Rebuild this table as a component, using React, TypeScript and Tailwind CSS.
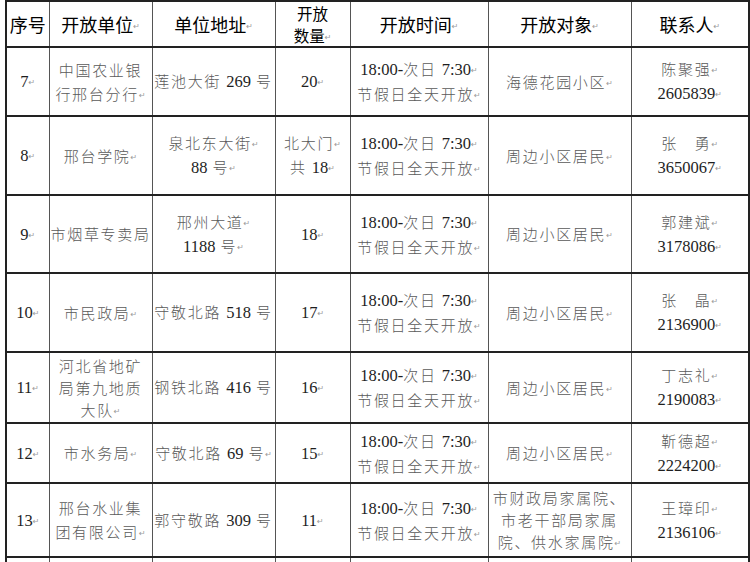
import React from 'react';

const TIME = '18:00-次日 7:30↵\n节假日全天开放↵';

const rows = [
  { n: '7↵', unit: '中国农业银\n行邢台分行↵', addr: '莲池大街 269 号', qty: '20↵', target: '海德花园小区↵', contact: '陈聚强↵\n2605839↵', h: 'h-[69px]' },
  { n: '8↵', unit: '邢台学院↵', addr: '泉北东大街↵\n88 号↵', qty: '北大门↵\n共 18↵', target: '周边小区居民↵', contact: '张　勇↵\n3650067↵', h: 'h-[79px]' },
  { n: '9↵', unit: '市烟草专卖局', addr: '邢州大道↵\n1188 号↵', qty: '18↵', target: '周边小区居民↵', contact: '郭建斌↵\n3178086↵', h: 'h-[78px]' },
  { n: '10↵', unit: '市民政局↵', addr: '守敬北路 518 号', qty: '17↵', target: '周边小区居民↵', contact: '张　晶↵\n2136900↵', h: 'h-[79px]' },
  { n: '11↵', unit: '河北省地矿\n局第九地质\n大队↵', addr: '钢铁北路 416 号', qty: '16↵', target: '周边小区居民↵', contact: '丁志礼↵\n2190083↵', h: 'h-[71px]' },
  { n: '12↵', unit: '市水务局↵', addr: '守敬北路 69 号↵', qty: '15↵', target: '周边小区居民↵', contact: '靳德超↵\n2224200↵', h: 'h-[60px]' },
  { n: '13↵', unit: '邢台水业集\n团有限公司↵', addr: '郭守敬路 309 号', qty: '11↵', target: '市财政局家属院、\n市老干部局家属\n院、供水家属院↵', contact: '王璋印↵\n2136106↵', h: 'h-[74px]' },
];

// small grey paragraph mark, as Word shows it
const Mark = () => (
  <span className="font-['DejaVu_Sans',sans-serif] text-[8px] leading-none text-[#9a9a9a] tracking-normal align-middle">↵</span>
);

// splits a line into digit runs (Times-like), CJK runs and paragraph marks
const Line = ({ s }: { s: string }) => {
  const parts = s.split(/([0-9:\-]+|↵)/).filter((p) => p !== '');
  return (
    <div className="whitespace-nowrap">
      {parts.map((p, i) => {
        if (p === '↵') return <Mark key={i} />;
        if (/^[0-9:\-]+$/.test(p)) {
          return (
            <span key={i} className="font-['Liberation_Serif',serif] text-[16.5px] text-[#1e1e1e] tracking-normal">
              {p}
            </span>
          );
        }
        return (
          <span key={i} className="font-['Noto_Sans_CJK_SC',sans-serif] font-light text-[15px] text-[#5a5a5a] tracking-[1.7px]">
            {p}
          </span>
        );
      })}
    </div>
  );
};

const Cell = ({ s, first, last }: { s: string; first?: boolean; last?: boolean }) => {
  const lines = s.split('\n');
  return (
    <td
      className={`border-y-2 border-y-[#222] border-x border-x-[#555] px-[1px] text-center align-middle ${
        lines.length > 2 ? 'leading-[22px]' : 'leading-[24px]'
      } ${first ? 'border-l-2 border-l-[#222]' : ''} ${last ? 'border-r-2 border-r-[#222]' : ''}`}
    >
      {lines.map((l, i) => (
        <Line key={i} s={l} />
      ))}
    </td>
  );
};

const Head = ({ s, first, last }: { s: string; first?: boolean; last?: boolean }) => (
  <th
    className={`border-y-2 border-y-[#222] border-x border-x-[#555] p-0 text-center align-middle font-normal font-['Noto_Sans_CJK_SC',sans-serif] text-[18px] leading-[20px] text-black ${
      first ? 'border-l-2 border-l-[#222]' : ''
    } ${last ? 'border-r-2 border-r-[#222]' : ''}`}
  >
    {s.split('\n').map((l, i) => {
      const mark = l.endsWith('↵');
      return (
        <div key={i} className="whitespace-nowrap">
          {mark ? l.slice(0, -1) : l}
          {mark && <Mark />}
        </div>
      );
    })}
  </th>
);

export default function App() {
  return (
    <div className="w-[750px] h-[562px] overflow-hidden bg-white pl-[5px]">
      <table className="table-fixed border-collapse w-[743px]">
        <colgroup>
          <col className="w-[43px]" />
          <col className="w-[103px]" />
          <col className="w-[123px]" />
          <col className="w-[75px]" />
          <col className="w-[138px]" />
          <col className="w-[143px]" />
          <col className="w-[118px]" />
        </colgroup>
        <thead>
          <tr className="h-[46px]">
            <Head s="序号" first />
            <Head s="开放单位↵" />
            <Head s="单位地址↵" />
            <th className="border-y-2 border-y-[#222] border-x border-x-[#555] p-0 text-center align-middle font-normal font-['Noto_Sans_CJK_SC',sans-serif] text-[15.5px] leading-[22px] text-black">
              <div className="whitespace-nowrap">开放</div>
              <div className="whitespace-nowrap">
                数量
                <Mark />
              </div>
            </th>
            <Head s="开放时间↵" />
            <Head s="开放对象↵" />
            <Head s="联系人↵" last />
          </tr>
        </thead>
        <tbody>
          {rows.map((r) => (
            <tr key={r.n} className={r.h}>
              <Cell s={r.n} first />
              <Cell s={r.unit} />
              <Cell s={r.addr} />
              <Cell s={r.qty} />
              <Cell s={TIME} />
              <Cell s={r.target} />
              <Cell s={r.contact} last />
            </tr>
          ))}
          <tr className="h-[40px]">
            <Cell s="" first />
            <Cell s="" />
            <Cell s="" />
            <Cell s="" />
            <Cell s="" />
            <Cell s="" />
            <Cell s="" last />
          </tr>
        </tbody>
      </table>
    </div>
  );
}
